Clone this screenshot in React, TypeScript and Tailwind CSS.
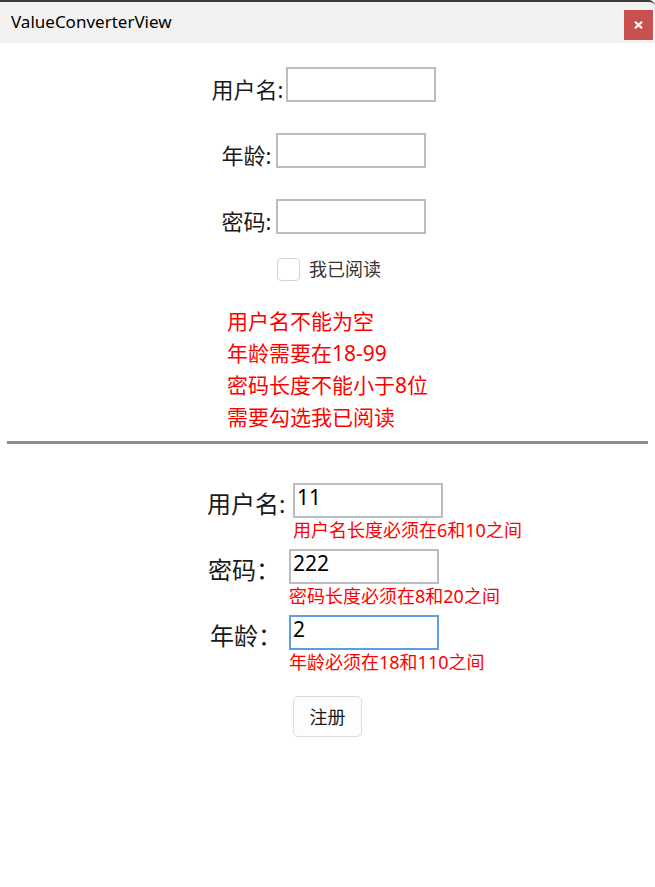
import React from "react";

function Field({ value, focused }: { value: string; focused?: boolean }) {
  return (
    <div
      className={
        "w-[150px] h-[35px] border-2 px-[2px] text-[21px] leading-[24px] text-black " +
        (focused ? "border-[#5a9fe6]" : "border-[#bdbdbd]")
      }
    >
      {value}
    </div>
  );
}

export default function App() {
  return (
    <div className="w-[655px] h-[887px] bg-white overflow-hidden font-['Noto_Sans','Noto_Sans_CJK_SC',sans-serif] text-[#1a1a1a]">
      {/* title bar */}
      <div className="h-[43px] border-t-2 border-[#3b3b3b] bg-[#f3f2f0] flex items-start justify-between rounded-tr-[6px]">
        <span className="pl-[11px] pt-[9px] text-[17px] leading-[22px] text-black">ValueConverterView</span>
        <div className="mt-[8px] mr-[2px] w-[29px] h-[30px] bg-[#c75050] flex items-center justify-center">
          <svg width="9" height="8" viewBox="0 0 9 8">
            <path d="M1 0.8 L8 7.2 M8 0.8 L1 7.2" stroke="white" strokeWidth="2.2" />
          </svg>
        </div>
      </div>

      {/* top form */}
      <div className="pt-[24px] flex flex-col items-center pr-[7px]">
        <div className="flex gap-[3px]">
          <span className="text-[22px] pt-[10px] leading-[25px]">用户名:</span>
          <div className="w-[150px] h-[35px] border-2 border-[#bdbdbd]" />
        </div>
        <div className="flex gap-[5px] mt-[31px]">
          <span className="text-[22px] pt-[10px] leading-[25px]">年龄:</span>
          <div className="w-[150px] h-[35px] border-2 border-[#bdbdbd]" />
        </div>
        <div className="flex gap-[5px] mt-[31px]">
          <span className="text-[22px] pt-[10px] leading-[25px]">密码:</span>
          <div className="w-[150px] h-[35px] border-2 border-[#bdbdbd]" />
        </div>
        <div className="flex items-center gap-[9px] mt-[23px] pl-[10px]">
          <div className="w-[23px] h-[23px] rounded-[4px] border border-[#d2d2d2] bg-white" />
          <span className="text-[18px] leading-[24px] text-[#333]">我已阅读</span>
        </div>
      </div>

      <div className="mt-[24px] ml-[227px] text-[21px] leading-[32px] text-[#ff0000]">
        <div>用户名不能为空</div>
        <div>年龄需要在18-99</div>
        <div>密码长度不能小于8位</div>
        <div>需要勾选我已阅读</div>
      </div>

      <div className="mt-[8px] mx-[7px] h-[3px] bg-[#8c8c8c]" />

      {/* bottom form */}
      <div className="pt-[39px] ml-[207px] flex flex-col">
        <div className="flex items-start">
          <span className="w-[86px] text-[24px] leading-[35px] pt-[3px]">用户名:</span>
          <div className="flex flex-col">
            <Field value="11" />
            <span className="text-[18px] leading-[24px] text-[#ff0000] whitespace-nowrap">用户名长度必须在6和10之间</span>
          </div>
        </div>
        <div className="flex items-start mt-[7px] pl-[1px]">
          <span className="w-[81px] text-[24px] leading-[35px] pt-[3px]">密码：</span>
          <div className="flex flex-col">
            <Field value="222" />
            <span className="text-[18px] leading-[24px] text-[#ff0000] whitespace-nowrap">密码长度必须在8和20之间</span>
          </div>
        </div>
        <div className="flex items-start mt-[7px] pl-[3px]">
          <span className="w-[79px] text-[24px] leading-[35px] pt-[3px]">年龄：</span>
          <div className="flex flex-col">
            <Field value="2" focused />
            <span className="text-[18px] leading-[24px] text-[#ff0000] whitespace-nowrap">年龄必须在18和110之间</span>
          </div>
        </div>
      </div>

      <div className="flex justify-center mt-[22px]">
        <button className="w-[69px] h-[41px] rounded-[5px] border border-[#dcdcdc] bg-[#fdfdfd] text-[18px] leading-[24px] text-[#1a1a1a]">
          注册
        </button>
      </div>
    </div>
  );
}
